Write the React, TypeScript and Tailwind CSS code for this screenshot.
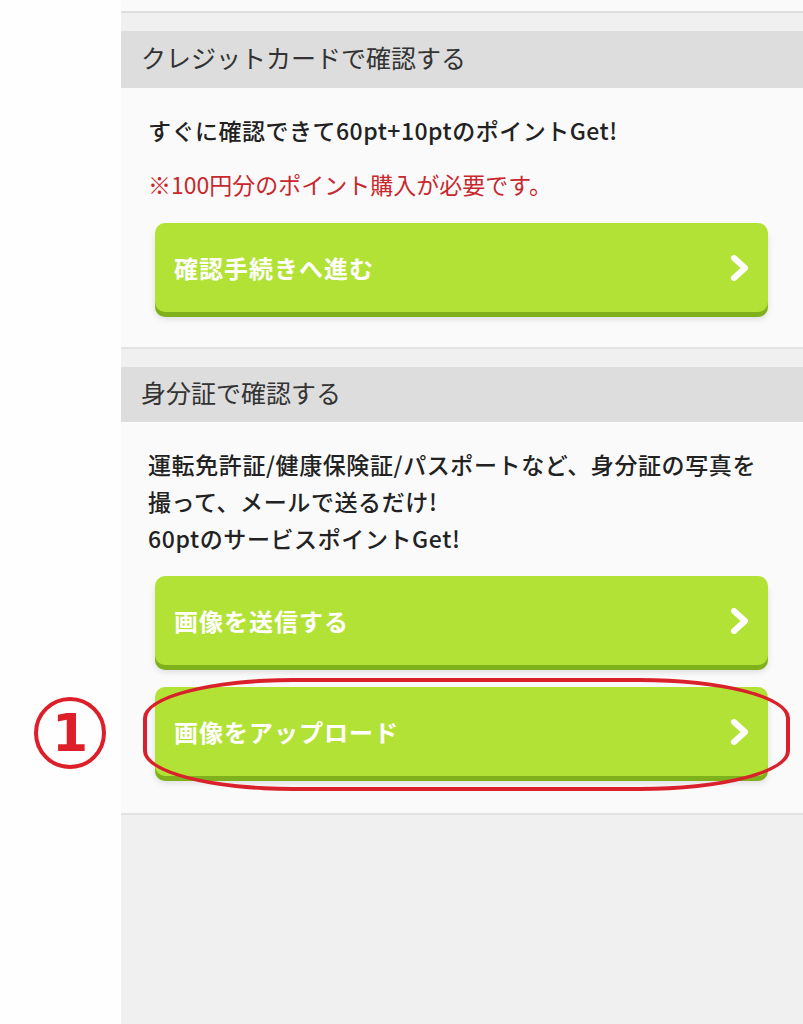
function Chevron() {
  return (
    <svg width="20" height="26" viewBox="0 0 20 26" fill="none">
      <polyline
        points="4,3 15,13 4,23"
        stroke="white"
        strokeWidth="6"
        strokeLinejoin="round"
        strokeLinecap="round"
      />
    </svg>
  );
}

function GreenButton({ label, className = "" }: { label: string; className?: string }) {
  return (
    <div
      className={
        "ml-[7px] h-[89px] rounded-[10px] bg-[#b3e236] shadow-[0_5px_0_#7fb11c,0_7px_6px_rgba(0,0,0,0.12)] flex items-center justify-between pl-[19px] pr-[18px] " +
        className
      }
    >
      <span className="text-white text-[24px] font-bold tracking-[1px]">{label}</span>
      <Chevron />
    </div>
  );
}

function SectionHeader({ title, h }: { title: string; h: string }) {
  return (
    <div className={"bg-[#dddddd] flex items-center pl-[20px] pb-[3px] text-[25px] text-[#333333] " + h}>
      {title}
    </div>
  );
}

export default function App() {
  return (
    <div className="relative w-[803px] min-h-[1024px] flex bg-[#fefefe] font-['Noto_Sans_CJK_JP','Noto_Sans',sans-serif]">
      {/* left margin */}
      <div className="w-[121px] shrink-0" />

      {/* panel */}
      <div className="flex-1 flex flex-col bg-[#f0f0f0]">
        <div className="h-[13px] bg-[#fafafa] border-b-2 border-[#dedede]" />
        <div className="h-[18px]" />

        {/* credit card */}
        <SectionHeader title="クレジットカードで確認する" h="h-[57px]" />
        <div className="bg-[#fafafa] pt-[24px] pb-[35px] pl-[27px] pr-[35px] border-b-2 border-[#e2e2e2]">
          <p className="text-[23px] leading-[36px] font-medium tracking-[0.5px] text-[#222222]">
            すぐに確認できて60pt+10ptのポイントGet!
          </p>
          <p className="mt-[18px] text-[23px] leading-[36px] text-[#c8282d]">
            ※100円分のポイント購入が必要です。
          </p>
          <GreenButton label="確認手続きへ進む" className="mt-[21px]" />
        </div>

        <div className="h-[18px]" />

        {/* id card */}
        <SectionHeader title="身分証で確認する" h="h-[55px]" />
        <div className="bg-[#fafafa] pt-[24px] pb-[37px] pl-[27px] pr-[35px] border-b-2 border-[#e2e2e2]">
          <p className="text-[23px] leading-[37px] font-medium tracking-[0.6px] text-[#222222]">
            運転免許証/健康保険証/パスポートなど、身分証の写真を
            <br />
            撮って、メールで送るだけ!
            <br />
            60ptのサービスポイントGet!
          </p>
          <GreenButton label="画像を送信する" className="mt-[19px]" />
          <GreenButton label="画像をアップロード" className="mt-[22px]" />
        </div>

        <div className="flex-1 min-h-[200px]" />
      </div>

      {/* annotation: circled number */}
      <div className="absolute left-[34px] top-[697px] w-[72px] h-[72px] rounded-full border-[4px] border-[#dd1f29] flex items-center justify-center">
        <span className="font-['DejaVu_Sans',sans-serif] font-bold text-[52px] leading-none text-[#dd1f29]">1</span>
      </div>

      {/* annotation: ellipse around upload button */}
      <div className="absolute left-[143px] top-[678px] w-[647px] h-[113px] rounded-[150px/40px] border-[4px] border-[#d9212b]" />
    </div>
  );
}
